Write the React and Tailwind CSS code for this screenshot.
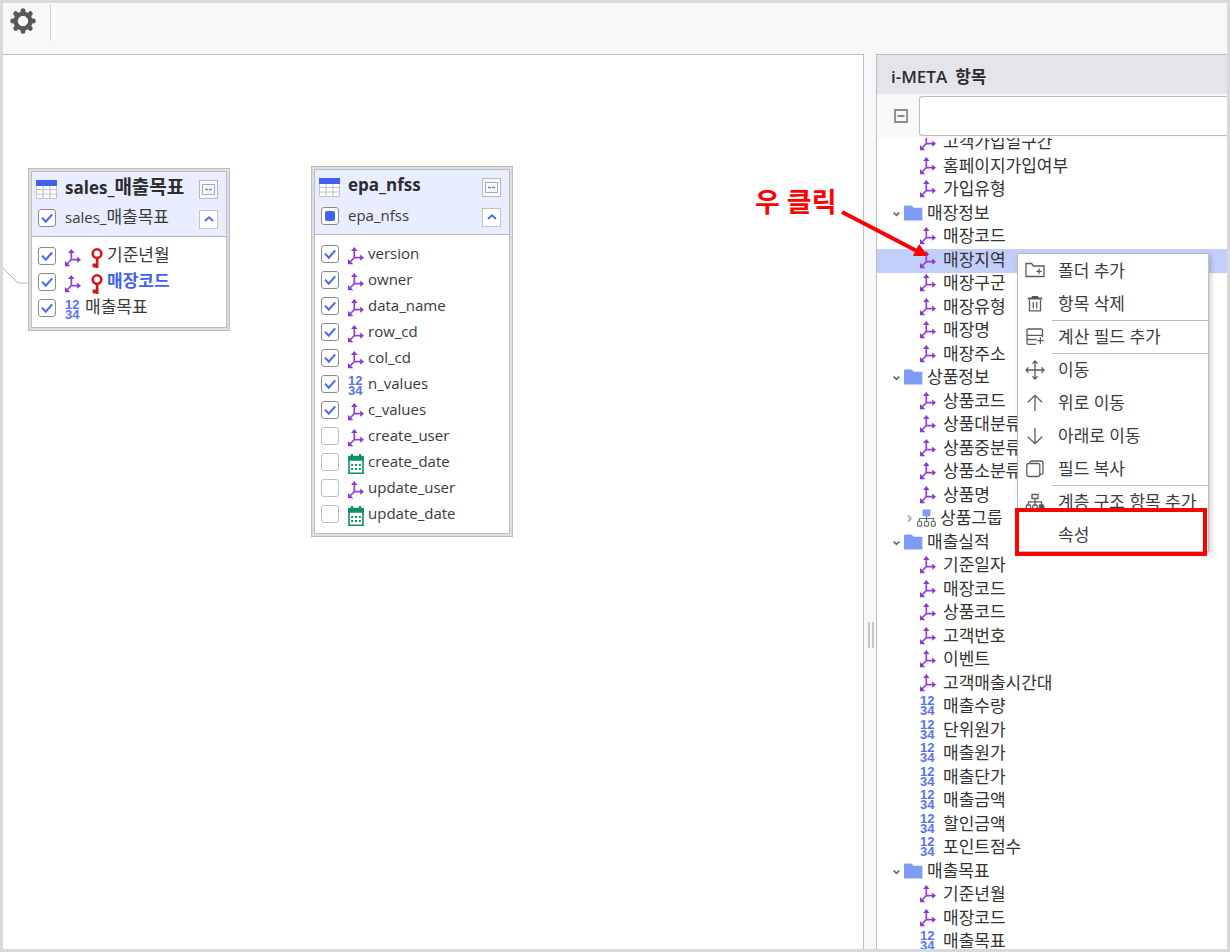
import React from "react";

const FONT = "font-['Open_Sans','Noto_Sans_CJK_KR',sans-serif]";

/* ---------- icons ---------- */

function GearIcon() {
  return (
    <svg width="26" height="26" viewBox="0 0 26 26" aria-hidden="true">
      <g stroke="#595959" strokeWidth="4.8" strokeLinecap="round">
        {[0, 45, 90, 135].map((a) => (
          <path key={a} d="M13 2.6V5.5M13 20.5v2.9" transform={`rotate(${a} 13 13)`} />
        ))}
      </g>
      <circle cx="13" cy="13" r="7.4" fill="none" stroke="#595959" strokeWidth="4.4" />
    </svg>
  );
}

function AxisIcon() {
  return (
    <svg width="16" height="18" viewBox="0 0 16 18" className="shrink-0" aria-hidden="true">
      <path d="M6.3 2.5v8.2H14M6.3 10.7 2 15" fill="none" stroke="#9340dc" strokeWidth="1.7" />
      <path d="M6.3 0 9.5 4H3.1zM16 10.7 12.2 13.8V7.6zM0 17.3v-5.4l5.4 5.4z" fill="#8f35d8" />
    </svg>
  );
}

function NumberIcon() {
  return (
    <span
      aria-hidden="true"
      className="grid h-5 w-4 shrink-0 grid-rows-2 font-['Liberation_Sans',sans-serif] text-[13px] leading-[10px] font-bold text-[#5573f2]"
    >
      <span>12</span>
      <span>34</span>
    </span>
  );
}

function CalendarIcon() {
  return (
    <svg width="16" height="20" viewBox="0 0 16 20" className="shrink-0" aria-hidden="true">
      <path d="M1 4h14v15.2H1z" fill="#fff" stroke="#0f8f68" strokeWidth="1.6" />
      <path d="M0.2 1.8h15.6v5H0.2zM3 0h2v3H3zM11 0h2v3h-2z" fill="#0f8f68" />
      <path
        d="M3.2 10h2v2h-2zM7 10h2v2H7zM10.8 10h2v2h-2zM3.2 14h2v2h-2zM7 14h2v2H7zM10.8 14h2v2h-2z"
        fill="#0f8f68"
      />
    </svg>
  );
}

function KeyIcon() {
  return (
    <svg width="12" height="20" viewBox="0 0 12 20" className="shrink-0" aria-hidden="true">
      <circle cx="6" cy="5.6" r="4.3" fill="none" stroke="#d8151e" strokeWidth="2.6" />
      <path d="M4.8 9.5h2.7V20H4.8zM1.6 15.6h4v3.8h-4z" fill="#d8151e" />
    </svg>
  );
}

function TableIcon() {
  return (
    <svg width="21" height="19" viewBox="0 0 21 19" aria-hidden="true">
      <path d="M0.5 5.5h20v13h-20z" fill="#fff" stroke="#c4c4c4" />
      <path d="M0.5 9.5h20M0.5 14h20M7 6v12.5M14 6v12.5" stroke="#c4c4c4" strokeWidth="1.2" />
      <path d="M0 0h21v6H0z" fill="#3f60f0" />
    </svg>
  );
}

function FolderIcon() {
  return (
    <svg width="19" height="16" viewBox="0 0 19 16" className="shrink-0" aria-hidden="true">
      <path d="M0 1.5 1 0.4h6.6l2 2.4H18.4v12.8H0z" fill="#7f9cf5" />
    </svg>
  );
}

function GroupIcon() {
  return (
    <svg width="19" height="18" viewBox="0 0 19 18" className="shrink-0" aria-hidden="true">
      <path d="M5.5 0.5h8v6.6h-8z" fill="#7f9cf5" />
      <g fill="none" stroke="#6b6b6b" strokeWidth="1.2">
        <path d="M9.5 7v5.5M2.5 12.5V9.5h14v3" />
        <rect x="0.6" y="12.5" width="4" height="4.6" rx="1" />
        <rect x="7.5" y="12.5" width="4" height="4.6" rx="1" />
        <rect x="14.3" y="12.5" width="4" height="4.6" rx="1" />
      </g>
    </svg>
  );
}

function Chevron({ open }) {
  return (
    <svg width="7" height="8" viewBox="0 0 7 8" className="shrink-0" aria-hidden="true">
      <path
        d={open ? "M0.6 3.6 3.5 6.2 6.4 3.6" : "M2 1.4 4.8 4.5 2 7.6"}
        fill="none"
        stroke={open ? "#6f6f6f" : "#aaa"}
        strokeWidth="1.8"
      />
    </svg>
  );
}

const MENU_DRAWINGS = {
  folder: <path d="M1 15.5V2.5h5.5l2 2.5H19v10.5zM11.3 10.3h5.4M14 7.6V13" />,
  trash: (
    <>
      <path d="M4.5 6v10.8h11V6M8.3 8v6.5M11.7 8v6.5" />
      <path d="M2.8 5.4V3.4h4V2h6.4v1.4h4v2z" fill="#555" stroke="none" />
    </>
  ),
  field: (
    <>
      <path d="M2 6.5V3.3Q2 2 3.3 2H16q1.5 0 1.5 1.3v5H2v-2M2 8.3v8q0 1 1.2 1H11M2 12.5h9.5M17.5 8.3v2" />
      <path d="M12 13.7h6.8M15.4 10.3V17" />
    </>
  ),
  move: (
    <path d="M10 1v18M1 10h18M7.4 3.6 10 1l2.6 2.6M7.4 16.4 10 19l2.6-2.6M3.6 7.4 1 10l2.6 2.6M16.4 7.4 19 10l-2.6 2.6" />
  ),
  up: <path d="M10 18V2.3M2.8 9.3 10 2.3l7.2 7" />,
  down: <path d="M10 2v15.7M2.8 10.7l7.2 7 7.2-7" />,
  copy: (
    <>
      <rect x="1.8" y="4.5" width="13" height="13" rx="2" />
      <path d="M5 4.3V3.5Q5 2 6.5 2H16q2 0 2 2v9.5q0 1.8-1.8 1.8h-1.2" />
    </>
  ),
  tree: (
    <>
      <path d="M7 2.5h6v4H7zM10 6.5v7M3.5 13V9.8h13V13" />
      <rect x="1.2" y="13" width="4.4" height="4.5" rx="1" />
      <rect x="7.8" y="13" width="4.4" height="4.5" rx="1" />
      <rect x="14.4" y="13" width="4.4" height="4.5" rx="1" fill="#555" />
    </>
  ),
};

function MenuIcon({ name }) {
  return (
    <svg
      width="20"
      height="20"
      viewBox="0 0 20 20"
      fill="none"
      stroke="#5c5c5c"
      strokeWidth="1.3"
      aria-hidden="true"
    >
      {MENU_DRAWINGS[name]}
    </svg>
  );
}

/* ---------- table cards ---------- */

function Check({ checked, partial }) {
  return (
    <span className="grid w-[21px] shrink-0 place-items-center">
      <input
        type="checkbox"
        defaultChecked={checked}
        className="peer col-start-1 row-start-1 size-[18px] appearance-none rounded-[3px] border border-[#bdbdbd] bg-white checked:border-[#8c8c8c]"
      />
      <svg
        width="18"
        height="18"
        viewBox="0 0 18 18"
        className="pointer-events-none invisible col-start-1 row-start-1 peer-checked:visible"
        aria-hidden="true"
      >
        {partial ? (
          <rect x="4" y="4" width="10" height="10" rx="2" fill="#3f60f0" />
        ) : (
          <path d="M4 8.6 7.8 12.6 14.2 5.4" fill="none" stroke="#4a6cf7" strokeWidth="2.1" />
        )}
      </svg>
    </span>
  );
}

const TYPE_ICONS = { axis: AxisIcon, number: NumberIcon, date: CalendarIcon };

function Name({ latin, korean, bold }) {
  return (
    <span className="flex items-baseline pb-0.5 whitespace-nowrap">
      {latin && <span className={bold ? "text-[17px]" : "text-[15px]"}>{latin}</span>}
      {korean && <span className={bold ? "text-[19px]" : "text-[17px]"}>{korean}</span>}
    </span>
  );
}

function TableCard({ latin, korean, partial, fields, place }) {
  return (
    <section
      className={`absolute w-[202px] border border-[#bdbdbd] bg-[#dedede] p-0.5 text-[#3a3a3a] ${place}`}
    >
      <div className="border border-[#bdbdbd] bg-white">
        <header className="border-b border-[#b5b5b5] bg-[#e8edff] py-0.5 pr-2 pl-1">
          <div className="flex h-[30px] items-center gap-2">
            <span className="grid w-[21px] place-items-center">
              <TableIcon />
            </span>
            <h2 className="flex-1 pb-0.5 font-bold text-[#2d2d2d]">
              <Name latin={latin} korean={korean} bold />
            </h2>
            <button
              type="button"
              aria-label="축소"
              className="grid size-[19px] place-items-center border border-[#b9b9b9] bg-white/60"
            >
              <svg width="13" height="11" viewBox="0 0 13 11" aria-hidden="true">
                <path d="M0.5 0.5h12v10H0.5z" fill="none" stroke="#aaa" />
                <path d="M3 5.5h3M7 5.5h3" stroke="#888" strokeWidth="1.6" />
              </svg>
            </button>
          </div>
          <div className="flex h-[30px] items-center gap-2">
            <label className="flex flex-1 items-center gap-2 pb-0.5">
              <Check checked partial={partial} />
              <Name latin={latin} korean={korean} />
            </label>
            <button
              type="button"
              aria-label="접기"
              className="grid size-[19px] place-items-center border border-[#c4c4c4] bg-white"
            >
              <svg width="10" height="6" viewBox="0 0 10 6" aria-hidden="true">
                <path d="M1 5 5 1.3 9 5" fill="none" stroke="#4a6cf7" strokeWidth="1.8" />
              </svg>
            </button>
          </div>
        </header>
        <ul className="py-1.5 pl-1">
          {fields.map((f) => {
            const Icon = TYPE_ICONS[f.type];
            return (
              <li key={f.latin || f.korean}>
                <label className="flex h-[26px] items-center">
                  <Check checked={f.checked} />
                  <span className="mr-1 ml-2 flex items-center gap-2.5 pt-1">
                    <Icon />
                    {f.pk && <KeyIcon />}
                  </span>
                  <span className={f.link ? "font-bold text-[#3f60f0]" : ""}>
                    <Name latin={f.latin} korean={f.korean} />
                  </span>
                </label>
              </li>
            );
          })}
        </ul>
      </div>
    </section>
  );
}

const SALES_FIELDS = [
  { korean: "기준년월", type: "axis", pk: true, checked: true },
  { korean: "매장코드", type: "axis", pk: true, checked: true, link: true },
  { korean: "매출목표", type: "number", checked: true },
];

const EPA_FIELDS = [
  { latin: "version", type: "axis", checked: true },
  { latin: "owner", type: "axis", checked: true },
  { latin: "data_name", type: "axis", checked: true },
  { latin: "row_cd", type: "axis", checked: true },
  { latin: "col_cd", type: "axis", checked: true },
  { latin: "n_values", type: "number", checked: true },
  { latin: "c_values", type: "axis", checked: true },
  { latin: "create_user", type: "axis" },
  { latin: "create_date", type: "date" },
  { latin: "update_user", type: "axis" },
  { latin: "update_date", type: "date" },
];

/* ---------- item tree ---------- */

const TREE = [
  ["axis", "고객가입일구간"],
  ["axis", "홈페이지가입여부"],
  ["axis", "가입유형"],
  ["folder", "매장정보"],
  ["axis", "매장코드"],
  ["axis", "매장지역", true],
  ["axis", "매장구군"],
  ["axis", "매장유형"],
  ["axis", "매장명"],
  ["axis", "매장주소"],
  ["folder", "상품정보"],
  ["axis", "상품코드"],
  ["axis", "상품대분류"],
  ["axis", "상품중분류"],
  ["axis", "상품소분류"],
  ["axis", "상품명"],
  ["group", "상품그룹"],
  ["folder", "매출실적"],
  ["axis", "기준일자"],
  ["axis", "매장코드"],
  ["axis", "상품코드"],
  ["axis", "고객번호"],
  ["axis", "이벤트"],
  ["axis", "고객매출시간대"],
  ["number", "매출수량"],
  ["number", "단위원가"],
  ["number", "매출원가"],
  ["number", "매출단가"],
  ["number", "매출금액"],
  ["number", "할인금액"],
  ["number", "포인트점수"],
  ["folder", "매출목표"],
  ["axis", "기준년월"],
  ["axis", "매장코드"],
  ["number", "매출목표"],
];

function TreeRow({ kind, text, selected }) {
  let body;
  if (kind === "folder") {
    body = (
      <span className="flex items-center gap-1 pl-4">
        <Chevron open />
        <FolderIcon />
        {text}
      </span>
    );
  } else if (kind === "group") {
    body = (
      <span className="flex items-center gap-1 pl-[29px]">
        <Chevron />
        <GroupIcon />
        {text}
      </span>
    );
  } else {
    const Icon = TYPE_ICONS[kind];
    body = (
      <span className="flex items-center gap-[7px] pl-[43px]">
        <Icon />
        {text}
      </span>
    );
  }
  return (
    <li
      role="treeitem"
      aria-selected={!!selected}
      className={`flex h-[23px] items-center pb-[3px] even:h-6 ${selected ? "bg-[#c3cffb]" : ""}`}
    >
      {body}
    </li>
  );
}

/* ---------- context menu ---------- */

const MENU = [
  { icon: "folder", text: "폴더 추가" },
  { icon: "trash", text: "항목 삭제" },
  { icon: "field", text: "계산 필드 추가", line: true },
  { icon: "move", text: "이동", line: true },
  { icon: "up", text: "위로 이동" },
  { icon: "down", text: "아래로 이동" },
  { icon: "copy", text: "필드 복사" },
  { icon: "tree", text: "계층 구조 항목 추가", line: true },
  { text: "속성" },
];

function ContextMenu() {
  return (
    <div
      role="menu"
      className="absolute top-[250px] left-[1014px] w-[192px] border border-[#bdbdbd] bg-white shadow-[2px_2px_5px_rgba(0,0,0,0.2)]"
    >
      {MENU.map((m) => (
        <button
          key={m.text}
          type="button"
          role="menuitem"
          className="flex h-[33px] w-full items-center text-left text-[17px] text-[#3c3c3c]"
        >
          <span className="grid w-[34px] shrink-0 place-items-center">
            {m.icon && <MenuIcon name={m.icon} />}
          </span>
          <span
            className={`flex h-full flex-1 items-center border-t pl-1.5 whitespace-nowrap ${
              m.line ? "border-[#bdbdbd]" : "border-transparent"
            }`}
          >
            {m.text}
          </span>
        </button>
      ))}
    </div>
  );
}

/* ---------- page ---------- */

export default function App() {
  return (
    <div
      className={`relative flex h-screen flex-col overflow-hidden border-3 border-[#d9d9d9] bg-[#f8f8fb] ${FONT}`}
    >
      <div className="flex h-[51px] shrink-0 items-start">
        <button type="button" aria-label="설정" className="mt-[5px] ml-[7px]">
          <GearIcon />
        </button>
        <span className="mt-px ml-3.5 h-[37px] w-px bg-[#d0d0d0]" />
      </div>

      <div className="flex min-h-0 flex-1">
        <main className="relative flex-1 overflow-hidden border-t border-r border-[#bdbdbd] bg-white">
          <svg width="32" height="20" className="absolute top-[212px] left-0" aria-hidden="true">
            <path d="M0 1 15 16H28" fill="none" stroke="#b5b5b5" />
          </svg>
          <TableCard
            latin="sales_"
            korean="매출목표"
            fields={SALES_FIELDS}
            place="top-[113px] left-[25px]"
          />
          <TableCard latin="epa_nfss" partial fields={EPA_FIELDS} place="top-[111px] left-[308px]" />
        </main>

        <div role="separator" className="flex w-3 justify-center gap-0.5 pt-[568px] pl-0.5">
          <span className="h-[26px] w-0.5 bg-[#c6c6c6]" />
          <span className="h-[26px] w-0.5 bg-[#c6c6c6]" />
        </div>

        <aside className="flex w-[351px] shrink-0 flex-col border-t border-l border-[#bdbdbd] bg-white">
          <h1 className="flex h-[39px] shrink-0 items-center gap-2 bg-[#e5e4ea] px-3.5 pt-1 text-[17px] font-semibold text-[#2d2d2d]">
            <span>i-META</span>
            <span>항목</span>
          </h1>
          <div className="flex h-11 shrink-0 items-center bg-[#f8f8fb]">
            <button type="button" aria-label="모두 접기" className="ml-[17px]">
              <svg width="14" height="14" viewBox="0 0 14 14" aria-hidden="true">
                <path d="M1 1h12v12H1zM3.5 7h7" fill="none" stroke="#8a8a8a" strokeWidth="1.8" />
              </svg>
            </button>
            <input
              type="text"
              aria-label="항목 검색"
              className="ml-[11px] h-10 min-w-0 flex-1 rounded-l-[3px] border border-r-0 border-[#bdbdbd] bg-white px-2"
            />
          </div>
          <div className="min-h-0 flex-1 overflow-hidden">
            <ul role="tree" className="-mt-1.5 text-[17px] text-[#333]">
              {TREE.map(([kind, text, selected], i) => (
                <TreeRow key={i} kind={kind} text={text} selected={selected} />
              ))}
            </ul>
          </div>
        </aside>
      </div>

      <ContextMenu />

      <strong className="absolute top-[179px] left-[752px] text-[27px] leading-10 font-bold whitespace-nowrap text-[#ff0000]">
        우 클릭
      </strong>
      <svg width="90" height="52" className="absolute top-[206px] left-[836px]" aria-hidden="true">
        <path d="M3 3 78 42" stroke="#f00" strokeWidth="4" />
        <path d="M89 47 74 47 80 35z" fill="#f00" />
      </svg>
      <div className="absolute top-[505px] left-[1012px] h-12 w-48 border-4 border-[#ff0000]" />
    </div>
  );
}
